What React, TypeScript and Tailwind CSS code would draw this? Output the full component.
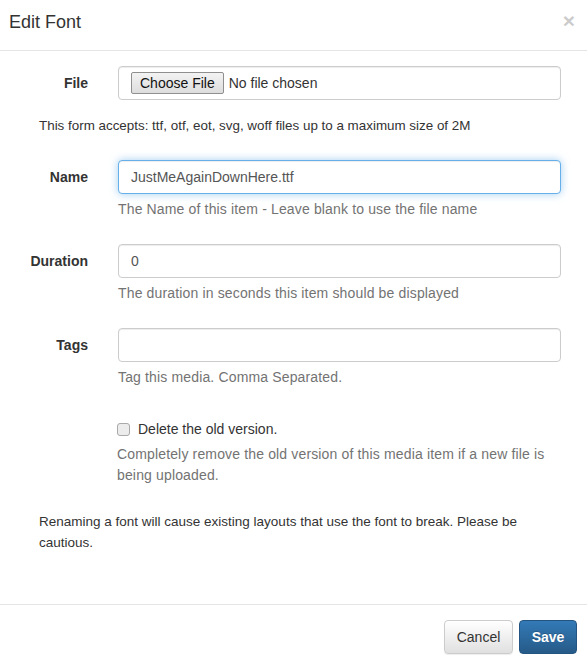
import React from "react";

function Row({ label, children }: { label: string; children: React.ReactNode }) {
  return (
    <div className="flex items-start">
      <div className="w-[88px] shrink-0 text-right font-bold text-[#333] leading-[20px] pt-[7px]">{label}</div>
      <div className="ml-[30px] w-[443px]">{children}</div>
    </div>
  );
}

const inputCls =
  "h-[34px] w-full rounded-[4px] border border-[#ccc] bg-white px-[12px] text-[14px] leading-[20px] text-[#555] shadow-[inset_0_1px_1px_rgba(0,0,0,0.075)] flex items-center";

const helpCls = "mt-[5px] text-[#737373] tracking-[0.15px]";

export default function App() {
  return (
    <div
      className="w-[587px] h-[665px] bg-white text-[14px] leading-[20px] text-[#333] flex flex-col overflow-hidden"
      style={{ fontFamily: '"Liberation Sans", Arial, sans-serif' }}
    >
      {/* Header */}
      <div className="h-[51px] shrink-0 border-b border-[#e5e5e5] flex items-start justify-between pl-[9px] pr-[12px]">
        <div className="text-[18px] leading-[26px] mt-[9px] text-[#333]">Edit Font</div>
        <div className="text-[21px] font-bold leading-[21px] mt-[10px] text-black opacity-20">×</div>
      </div>

      {/* Body */}
      <div className="flex-1 pt-[15px]">
        <Row label="File">
          <div className={inputCls}>
            <div className="h-[22px] px-[8px] flex items-center rounded-[2px] border border-[#8f8f8f] bg-gradient-to-b from-[#f3f3f3] to-[#dddddd] text-[14px] text-[#111] leading-none">
              Choose File
            </div>
            <span className="ml-[5px] text-[#333] text-[14px]">No file chosen</span>
          </div>
        </Row>
        <div className="pl-[39px] mt-[16px] text-[#333] text-[13.4px]">
          This form accepts: ttf, otf, eot, svg, woff files up to a maximum size of 2M
        </div>

        <div className="mt-[24px]">
          <Row label="Name">
            <div className="h-[34px] w-full rounded-[4px] border border-[#66afe9] bg-white px-[12px] text-[#555] flex items-center shadow-[inset_0_1px_1px_rgba(0,0,0,0.075),0_0_8px_rgba(102,175,233,0.6)]">
              JustMeAgainDownHere.ttf
            </div>
            <div className={helpCls}>The Name of this item - Leave blank to use the file name</div>
          </Row>
        </div>

        <div className="mt-[25px]">
          <Row label="Duration">
            <div className={inputCls}>0</div>
            <div className={helpCls}>The duration in seconds this item should be displayed</div>
          </Row>
        </div>

        <div className="mt-[25px]">
          <Row label="Tags">
            <div className={inputCls}></div>
            <div className={helpCls}>Tag this media. Comma Separated.</div>
          </Row>
        </div>

        <div className="mt-[32px] pl-[117px] pr-[26px]">
          <div className="flex items-center h-[20px]">
            <div className="w-[13px] h-[13px] rounded-[3px] border border-[#a9a9a9] bg-[#ececec] shrink-0" />
            <span className="ml-[8px] text-[#333]">Delete the old version.</span>
          </div>
          <div className="mt-[5px] text-[#737373] leading-[21px] w-[443px] tracking-[0.15px]">
            Completely remove the old version of this media item if a new file is being uploaded.
          </div>
        </div>

        <div className="mt-[25px] pl-[39px] w-[540px] leading-[21px] text-[#333] text-[13.5px]">
          Renaming a font will cause existing layouts that use the font to break. Please be cautious.
        </div>
      </div>

      {/* Footer */}
      <div className="h-[61px] shrink-0 border-t border-[#e5e5e5] flex items-start justify-end pt-[15px] pr-[10px]">
        <div className="h-[34px] w-[69px] rounded-[4px] border border-[#ccc] bg-gradient-to-b from-white to-[#e0e0e0] text-[#333] flex items-center justify-center shadow-[inset_0_1px_0_rgba(255,255,255,0.15),0_1px_1px_rgba(0,0,0,0.075)]">
          Cancel
        </div>
        <div className="ml-[6px] h-[34px] w-[58px] rounded-[4px] border border-[#245580] bg-gradient-to-b from-[#337ab7] to-[#265a88] text-white font-semibold flex items-center justify-center [text-shadow:0_-1px_0_rgba(0,0,0,0.2)]">
          Save
        </div>
      </div>
    </div>
  );
}
